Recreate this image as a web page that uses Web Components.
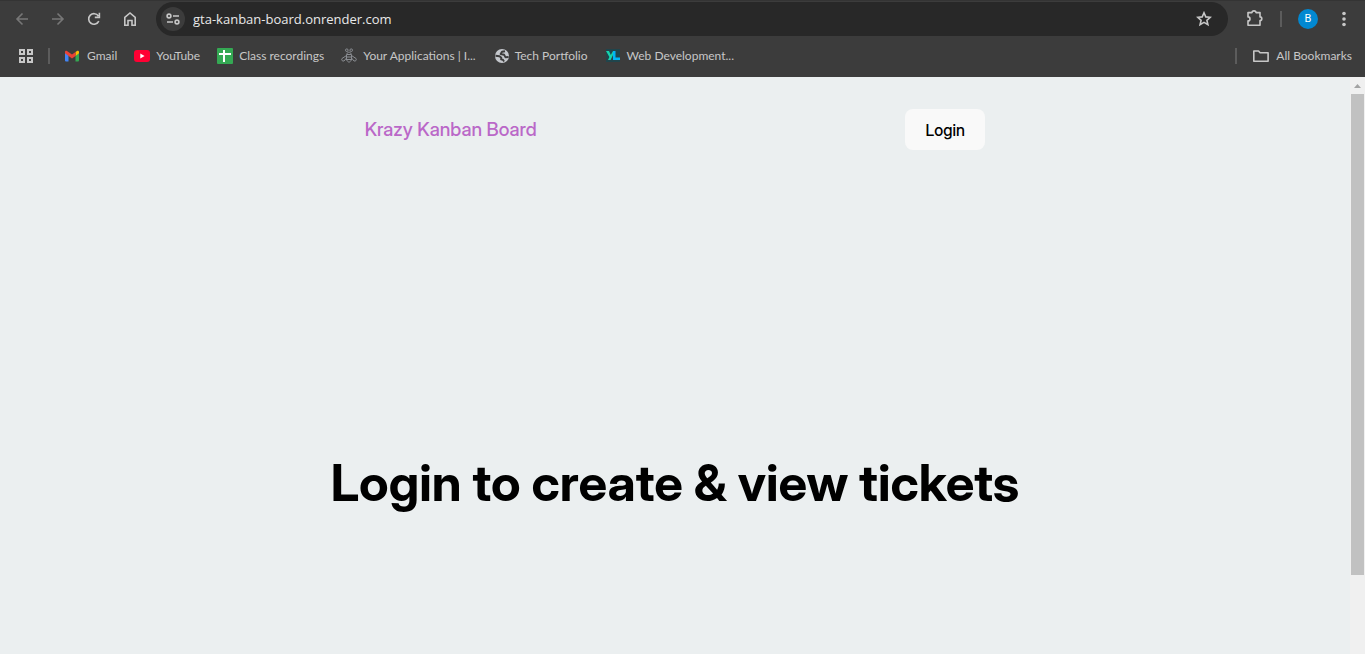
<!DOCTYPE html>
<html lang="en">
<head>
<meta charset="utf-8">
<meta name="viewport" content="width=device-width">
<title>Krazy Kanban Board</title>
<style>
html,body{margin:0;height:100%}
body{overflow:hidden;background:#3c3c3c}
</style>
</head>
<body>
<browser-window></browser-window>

<template id="t-window">
<style>
:host{display:flex;flex-direction:column;height:100vh;font-family:"Open Sans","Noto Sans",sans-serif}
.view{flex:1;min-height:0;display:flex;background:#ebeff0}
kanban-page{flex:1;min-width:0}
</style>
<browser-toolbar></browser-toolbar>
<bookmark-bar></bookmark-bar>
<div class="view"><kanban-page></kanban-page><scroll-bar></scroll-bar></div>
</template>

<template id="t-toolbar">
<style>
:host{display:flex;align-items:center;height:38px;padding:0 11px 1px 12px;background:#3c3c3c;color:#c7c7c7;border-top:1px solid #343434;box-sizing:border-box}
button{all:unset;display:grid;place-items:center;width:20px;height:20px;flex:none}
svg{display:block;fill:none;stroke:currentColor;stroke-width:1.6}
nav{display:flex;gap:16px;margin-right:16px}
.off{color:#777}
form{display:flex;align-items:center;flex:1;min-width:0;height:34px;border-radius:17px;background:#282828;padding:0 14px 0 5px;box-sizing:border-box}
.site{width:24px;height:24px;border-radius:50%;background:#3c3c3c}
input{all:unset;flex:1;min-width:0;margin-left:8px;font-size:13px;line-height:20px;color:#e8e8e8}
.ext{margin:0 16px}
i{width:2px;height:16px;background:#5c5c5c}
.me{background:#0288d1;border-radius:50%;color:#fff;font:11px/20px Roboto,sans-serif;margin:0 16px}
</style>
<nav>
<button class="off" aria-label="Back"><svg width="14" height="14"><path d="M13 7H2M7.500 1.500 2 7l5.500 5.500"/></svg></button>
<button class="off" aria-label="Forward"><svg width="14" height="14"><path d="M1 7h11M6.500 1.500 12 7l-5.500 5.500"/></svg></button>
<button aria-label="Reload"><svg width="14" height="14"><path d="M11.800 9.200A5.300 5.300 0 1 1 11.400 4M12.400.8v4.600H7.800"/></svg></button>
<button aria-label="Home"><svg width="14" height="16"><path d="M1.800 6.300 7 2l5.200 4.300v8H9V9.500H5v4.800H1.800z"/></svg></button>
</nav>
<form>
<button type="button" class="site" aria-label="View site information"><svg width="14" height="12"><circle cx="3" cy="3" r="1.900"/><path d="M7 3h6M1 9h6"/><circle cx="11" cy="9" r="1.900"/></svg></button>
<input aria-label="Address" value="gta-kanban-board.onrender.com">
<button type="button" aria-label="Bookmark this page"><svg width="16" height="16"><path d="m8 1.800 1.800 4.100 4.400.4-3.300 3 1 4.400L8 11.400l-3.900 2.300 1-4.400-3.300-3 4.400-.4z"/></svg></button>
</form>
<button class="ext" aria-label="Extensions"><svg width="18" height="18"><path d="M3 2.600h4a2 1.700 0 0 1 4 0h4v4.300a1.800 1.800 0 0 1 0 3.600v4.700H3v-4.300a2 2 0 0 0 0-4z" stroke-linejoin="round"/></svg></button>
<i></i>
<button class="me" aria-label="Profile">B</button>
<button aria-label="Menu"><svg width="4" height="16"><g fill="currentColor" stroke="none"><circle cx="2" cy="2.500" r="1.800"/><circle cx="2" cy="8" r="1.800"/><circle cx="2" cy="13.500" r="1.800"/></g></svg></button>
</template>

<template id="t-bookmarks">
<style>
:host{display:flex;align-items:center;height:39px;background:#3c3c3c;color:#c7c7c7;padding:0 13px 4px 18px;box-sizing:border-box;font-family:Lato,"Open Sans",sans-serif}
button{all:unset;width:16px;height:16px}
svg{display:block;flex:none}
i{width:2px;height:16px;background:#5c5c5c;margin:0 15px 0 14px}
nav{display:flex;flex:1;min-width:0;gap:17px}
</style>
<button aria-label="Apps"><svg width="16" height="16" fill="none" stroke="currentColor" stroke-width="2"><path d="M2 2h4v4H2zM10 2h4v4h-4zM2 10h4v4H2zM10 10h4v4h-4z"/></svg></button>
<i></i>
<nav>
<bookmark-link label="Gmail"><svg width="16" height="16"><path fill="#4285f4" d="M0 4.500 3.500 7v6.500H1a1 1 0 0 1-1-1z"/><path fill="#34a853" d="M14 4.500 10.500 7v6.500H13a1 1 0 0 0 1-1z"/><path fill="#fbbc04" d="M10.500 4 12 2.900c.8-.6 2-.1 2 1.100v1.300l-3.500 2.600z"/><path fill="#ea4335" d="M0 5.300V4c0-1.200 1.200-1.700 2-1.100l5 3.700 3.500-2.600v3.900L7 10.500z"/></svg></bookmark-link>
<bookmark-link label="YouTube"><svg width="16" height="16"><rect y="2" width="16" height="12" rx="3" fill="#ff0033"/><path fill="#fff" d="m6.300 5.500 4.300 2.500-4.300 2.500z"/></svg></bookmark-link>
<bookmark-link label="Class recordings"><svg width="16" height="16"><rect width="16" height="16" rx="1" fill="#34a853"/><path fill="#fff" d="M6 2h2v3h6v2H8v7H6V7H2V5h4z"/></svg></bookmark-link>
<bookmark-link label="Your Applications | I..."><svg width="16" height="16" fill="none" stroke="#8a8d92"><circle cx="5.800" cy="2.200" r="1.300"/><circle cx="10.200" cy="2.200" r="1.300"/><path d="M6 6c0-2.400 4-2.400 4 0M5.500 6.500h5V12L8 14.500 5.500 12zM5.500 9h5M5.500 11.500h5M5.500 7.500 1 10.500c-.9 1.800.3 2.800 2 2.500l2.500-3M10.500 7.500l4.500 3c.9 1.800-.3 2.800-2 2.500l-2.500-3"/></svg></bookmark-link>
<bookmark-link label="Tech Portfolio"><svg width="16" height="16"><circle cx="9" cy="8" r="7" fill="#c4c7cc"/><path fill="none" stroke="#3c3c3c" stroke-width="1.900" stroke-linejoin="round" d="M12 3.200 9 3.700 7.600 6l3.600.8 1.200 2.400 3.200-.2M2.500 7.800l4 .4 1.800 1.600-.2 1.600 1.800.4 1.200 1.700"/></svg></bookmark-link>
<bookmark-link label="Web Development..."><svg width="16" height="16"><path fill="#20454c" d="M1 1h14v13H1z"/><path fill="#16d3ac" d="M1 3h3l1.800 4L8 3h2l-4.500 9H3l1.400-3z"/><path fill="#00b5f5" d="M8 3h2.500v6.500H15V12H8z"/></svg></bookmark-link>
</nav>
<i></i>
<bookmark-link label="All Bookmarks"><svg width="18" height="16" fill="none" stroke="currentColor" stroke-width="1.600"><path d="M1.800 3h4.700l1.600 1.800h8v8.400H1.800z" stroke-linejoin="round"/></svg></bookmark-link>
</template>

<template id="t-link">
<style>
:host{display:block;flex:none}
a{display:flex;align-items:center;gap:6px;color:inherit;text-decoration:none;font-size:12px;line-height:16px;white-space:nowrap}
</style>
<a href="#"><slot></slot><span></span></a>
</template>

<template id="t-page">
<style>
:host{display:flex;flex-direction:column;align-items:center;overflow:hidden;background:#ebeff0;font-family:"Inter Display",Inter,"Liberation Sans",sans-serif;color:#000}
.root{display:flex;flex-direction:column;flex:none}
header{display:flex;justify-content:space-between;align-items:center;padding:32px 34px}
a{color:#ba68c8;font-size:19px;line-height:24px;text-decoration:none;font-weight:500}
button{border:0;border-radius:8px;background:#f9f9f9;color:#000;width:80px;height:41px;padding:0;font:inherit;font-size:16px;line-height:20px;font-weight:500}
main{display:flex;align-items:center;min-height:92vh}
h1{margin:0;font-size:51px;line-height:56px;font-weight:700;white-space:nowrap}
</style>
<div class="root">
<header><a href="#">Krazy Kanban Board</a><button>Login</button></header>
<main><h1>Login to create &amp; view tickets</h1></main>
</div>
</template>

<template id="t-scroll">
<style>
:host{display:flex;flex-direction:column;align-items:center;width:15px;background:#f0f0f0;flex:none}
svg{display:block;flex:none}
div{width:13px;height:86%;max-height:481px;background:#c1c1c1}
</style>
<svg width="15" height="17"><path fill="#a3a3a3" d="M4 11 7.500 7 11 11z"/></svg><div></div>
</template>

<script>
const define = (name, id, init) => customElements.define(name, class extends HTMLElement {
  constructor() {
    super();
    this.attachShadow({ mode: 'open' }).append(document.getElementById(id).content.cloneNode(true));
  }
  connectedCallback() { if (init) init(this); }
});
define('bookmark-link', 't-link', el => { el.shadowRoot.querySelector('span').textContent = el.getAttribute('label'); });
define('browser-toolbar', 't-toolbar');
define('bookmark-bar', 't-bookmarks');
define('kanban-page', 't-page');
define('scroll-bar', 't-scroll');
define('browser-window', 't-window');
</script>
</body>
</html>
